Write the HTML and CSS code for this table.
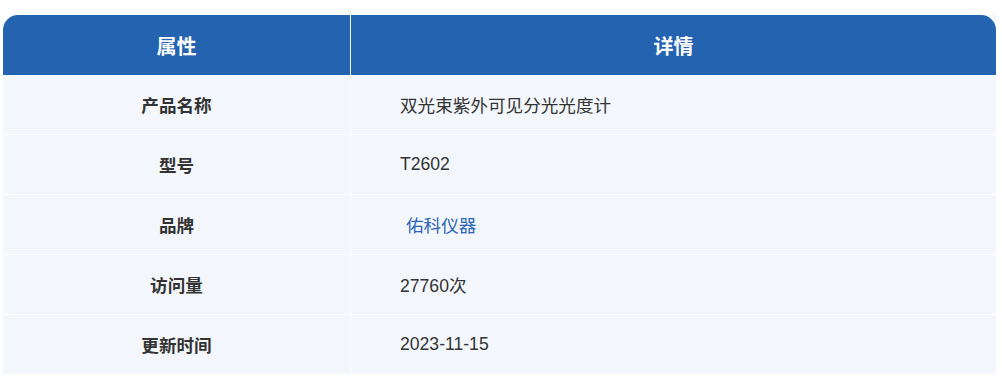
FILE: index.html
```html
<!DOCTYPE html>
<html lang="zh-CN">
<head>
<meta charset="utf-8">
<title>产品参数</title>
<link rel="stylesheet" href="styles.css">
</head>
<body>
<div class="page">
  <div class="spec">
    <div class="row head">
      <div class="cell key">属性</div>
      <div class="cell val center">详情</div>
    </div>
    <div class="row">
      <div class="cell key">产品名称</div>
      <div class="cell val">双光束紫外可见分光光度计</div>
    </div>
    <div class="row">
      <div class="cell key">型号</div>
      <div class="cell val">T2602</div>
    </div>
    <div class="row">
      <div class="cell key">品牌</div>
      <div class="cell val"><a class="brand" href="#">佑科仪器</a></div>
    </div>
    <div class="row">
      <div class="cell key">访问量</div>
      <div class="cell val">27760次</div>
    </div>
    <div class="row">
      <div class="cell key">更新时间</div>
      <div class="cell val">2023-11-15</div>
    </div>
  </div>
</div>
</body>
</html>
```

FILE: styles.css
```css
html, body {
  margin: 0;
  padding: 0;
  background: #ffffff;
}

.page {
  padding: 15px 6px 0 3px;
  font-family: "Liberation Sans", "Noto Sans CJK SC", sans-serif;
  color: #333333;
}

.spec {
  width: 993px;
  display: flex;
  flex-direction: column;
}

.row {
  display: grid;
  grid-template-columns: 347px 645px;
  column-gap: 1px;
  background: #ffffff;
  height: 59px;
  border-bottom: 1px solid #ffffff;
}

.row.head {
  height: 60px;
  border-bottom: 0;
  background: linear-gradient(to right, #ffffff 50%, #f3f7fc 50%);
}

.cell {
  display: flex;
  align-items: center;
  background: #f3f7fc;
  font-size: 17.6px;
}

.key {
  justify-content: center;
  font-weight: bold;
  color: #333333;
}

.val {
  padding-left: 49px;
}

.head .cell {
  background: #2463b0;
  color: #ffffff;
  font-size: 20px;
  font-weight: bold;
}

.head .key {
  border-top-left-radius: 15px;
}

.head .val {
  border-top-right-radius: 15px;
}

.head .center {
  justify-content: center;
  padding-left: 0;
}

.brand {
  margin-left: 6px;
  color: #2b64b8;
  text-decoration: none;
}
```
